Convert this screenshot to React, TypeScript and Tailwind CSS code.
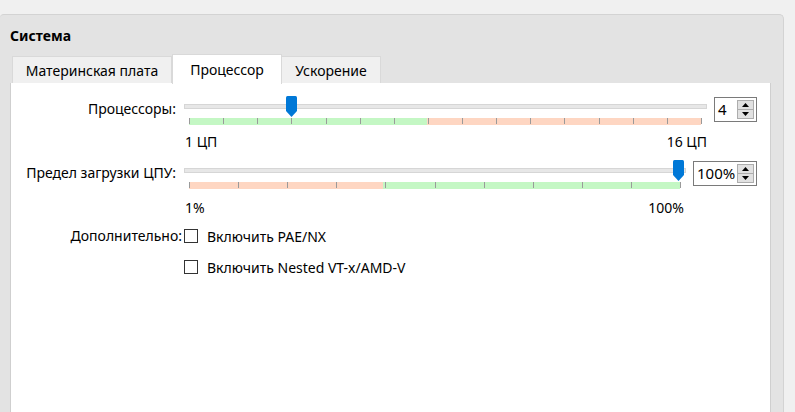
import React from 'react';

const font = { fontFamily: '"Segoe UI", "Noto Sans", "Open Sans", sans-serif' };

interface Zone {
  from: number;
  to: number;
  color: string;
}

const Thumb = () => (
  <svg width="11" height="21" viewBox="0 0 11 21">
    <path d="M0 1.5 Q0 0 1.5 0 H9.5 Q11 0 11 1.5 V15 L5.5 21 L0 15 Z" fill="#0078d7" />
  </svg>
);

const SpinBox = ({ value, width }: { value: string; width: string }) => (
  <div className={`${width} h-[25px] border border-[#7a7a7a] bg-white flex items-center justify-between pl-[3px] pr-[2px]`}>
    <span className="text-[15px] leading-none text-black">{value}</span>
    <div className="flex flex-col w-[17px] h-[19px] border border-[#adadad]">
      <div className="flex-1 bg-[#e1e1e1] border-b border-[#adadad] flex items-center justify-center">
        <svg width="7" height="4" viewBox="0 0 7 4"><path d="M0 4 L3.5 0 L7 4 Z" fill="#000" /></svg>
      </div>
      <div className="flex-1 bg-[#e1e1e1] flex items-center justify-center">
        <svg width="7" height="4" viewBox="0 0 7 4"><path d="M0 0 L3.5 4 L7 0 Z" fill="#000" /></svg>
      </div>
    </div>
  </div>
);

// thumb is 0..1 along the tick bar (which is inset 5px each side)
const Slider = ({
  width,
  ticks,
  zones,
  thumb,
}: {
  width: string;
  ticks: number;
  zones: Zone[];
  thumb: number;
}) => (
  <div className={`${width} relative h-[29px]`}>
    <div className="mt-[8px] h-[5px] bg-[#e7e7e7] border border-[#d6d6d6]" />
    <div className="absolute top-0" style={{ left: `calc(5px + ${thumb} * (100% - 13px) - 5px)` }}>
      <Thumb />
    </div>
    <div className="relative mt-[9px] ml-[5px] mr-[6px] h-[7px] flex">
      {zones.map((z, i) => (
        <div key={i} className="h-full" style={{ width: `${z.to - z.from}%`, background: z.color }} />
      ))}
      {Array.from({ length: ticks + 1 }).map((_, i) => (
        <div
          key={i}
          className="absolute top-0 w-px h-[6px] bg-[#9a9a9a]"
          style={{ left: `${(i / ticks) * 100}%` }}
        />
      ))}
    </div>
  </div>
);

const Checkbox = ({ label }: { label: string }) => (
  <div className="flex items-center h-[20px]">
    <div className="w-[14px] h-[14px] border border-[#333] bg-white" />
    <span className="ml-[9px] text-[14px] text-black">{label}</span>
  </div>
);

const green = '#c4f7c4';
const salmon = '#fed6c2';

export default function App() {
  return (
    <div className="w-[795px] h-[412px] bg-[#f0f0f0] pt-[14px] overflow-hidden" style={font}>
      <div className="w-[784px] h-[398px] bg-[#e3e3e3] border-t border-r border-[#d3d3d3] rounded-tr-[5px] rounded-tl-[4px] flex flex-col">
        <div className="pl-[10px] pt-[11px] h-[38px] text-[14px] font-bold text-black leading-[20px]">Система</div>
        <div className="ml-[10px] mr-[12px] flex-1 flex flex-col">
          <div className="flex items-end h-[30px] pl-[2px]">
            <div className="w-[160px] h-[27px] bg-[#f0f0f0] border border-b-0 border-[#d9d9d9] text-[14px] text-black flex items-center justify-center">
              Материнская плата
            </div>
            <div className="w-[110px] h-[30px] bg-white border border-b-0 border-[#d9d9d9] text-[14px] text-black flex items-center justify-center -mb-px relative">
              Процессор
            </div>
            <div className="w-[99px] h-[27px] bg-[#f0f0f0] border border-b-0 border-l-0 border-[#d9d9d9] text-[14px] text-black flex items-center justify-center">
              Ускорение
            </div>
          </div>
          <div className="flex-1 bg-white border-l border-r border-[#cfcfcf] pt-[13px] text-[14px] text-black">
            <div className="flex items-start">
              <div className="w-[173px] pr-[8px] text-right leading-[24px] pt-[1px]">Процессоры:</div>
              <Slider
                width="w-[523px]"
                ticks={15}
                thumb={0.2}
                zones={[
                  { from: 0, to: 46.5, color: green },
                  { from: 46.5, to: 100, color: salmon },
                ]}
              />
              <div className="ml-[7px] mt-px">
                <SpinBox value="4" width="w-[43px]" />
              </div>
            </div>
            <div className="flex mt-[9px]">
              <div className="w-[173px]" />
              <div className="w-[523px] flex justify-between pl-px leading-[16px]">
                <span>1 ЦП</span>
                <span>16 ЦП</span>
              </div>
            </div>
            <div className="flex items-start mt-[10px]">
              <div className="w-[173px] pr-[8px] text-right leading-[24px] pt-px">Предел загрузки ЦПУ:</div>
              <Slider
                width="w-[502px]"
                ticks={10}
                thumb={1}
                zones={[
                  { from: 0, to: 39.5, color: salmon },
                  { from: 39.5, to: 100, color: green },
                ]}
              />
              <div className="ml-[7px] mt-px">
                <SpinBox value="100%" width="w-[64px]" />
              </div>
            </div>
            <div className="flex mt-[11px]">
              <div className="w-[173px]" />
              <div className="w-[502px] flex justify-between pl-px pr-[2px] leading-[16px]">
                <span>1%</span>
                <span>100%</span>
              </div>
            </div>
            <div className="flex mt-[10px]">
              <div className="w-[173px] pr-[2px] text-right leading-[20px]">Дополнительно:</div>
              <div className="flex flex-col gap-[11px]">
                <Checkbox label="Включить PAE/NX" />
                <Checkbox label="Включить Nested VT-x/AMD-V" />
              </div>
            </div>
          </div>
        </div>
      </div>
    </div>
  );
}
